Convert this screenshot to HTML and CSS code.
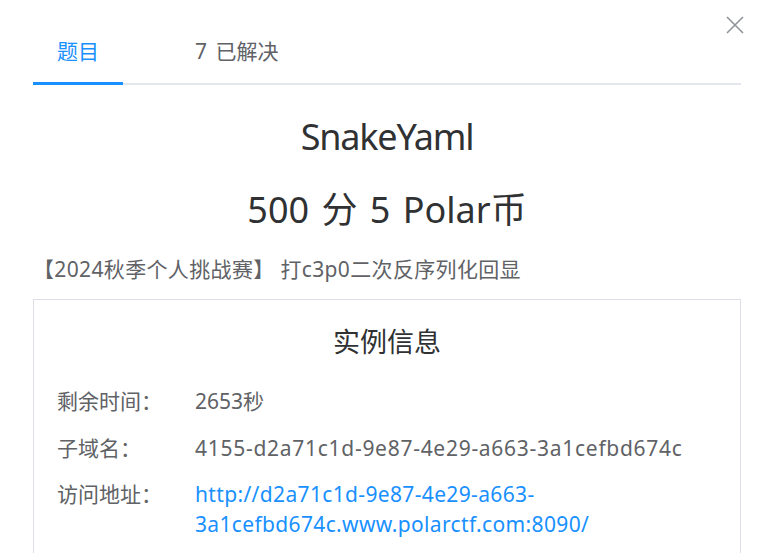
FILE: index.html
```html
<!DOCTYPE html>
<html lang="zh-CN">
<head>
<meta charset="utf-8">
<title>SnakeYaml</title>
<link rel="stylesheet" href="styles.css">
</head>
<body>
<div class="dialog">
  <button class="close" aria-label="关闭">
    <svg width="18" height="18" viewBox="0 0 18 18"><path d="M1 1L17 17M17 1L1 17" stroke="#909399" stroke-width="1.6" fill="none"/></svg>
  </button>
  <div class="tabs">
    <div class="tab active">题目</div>
    <div class="tab spaced">7 已解决</div>
  </div>
  <h1 class="title">SnakeYaml</h1>
  <div class="score">500 分 5 Polar币</div>
  <p class="desc">【2024秋季个人挑战赛】 打c3p0二次反序列化回显</p>
  <div class="card">
    <div class="card-title">实例信息</div>
    <div class="rows">
      <div class="row"><span class="label">剩余时间：</span><span class="value">2653秒</span></div>
      <div class="row"><span class="label">子域名：</span><span class="value mono">4155-d2a71c1d-9e87-4e29-a663-3a1cefbd674c</span></div>
      <div class="row"><span class="label">访问地址：</span><a class="value link" href="#">http://d2a71c1d-9e87-4e29-a663-3a1cefbd674c.www.polarctf.com:8090/</a></div>
    </div>
  </div>
</div>
</body>
</html>
```
FILE: styles.css
```css
* { box-sizing: border-box; }
html, body { margin: 0; padding: 0; background: #fff; }
body {
  font-family: "Noto Sans", "Noto Sans CJK SC", sans-serif;
  color: #606266;
  overflow: hidden;
}
.dialog {
  position: relative;
  padding: 20px 18px 40px 33px;
}
.close {
  position: absolute;
  top: 16px;
  right: 15px;
  width: 18px;
  height: 18px;
  padding: 0;
  border: 0;
  background: none;
  display: block;
}
.close svg { display: block; }
.tabs {
  display: flex;
  gap: 48px;
  border-bottom: 2px solid #e4e7ed;
}
.tab {
  position: relative;
  height: 63px;
  line-height: 63px;
  padding: 0 24px;
  font-size: 21px;
  color: #606266;
}
.tab.spaced { word-spacing: 3px; }
.tab.active { color: #1890ff; }
.tab.active::after {
  content: "";
  position: absolute;
  left: 0;
  right: 0;
  bottom: -2px;
  height: 3px;
  background: #1890ff;
}
.title {
  margin: 28px 0 0;
  font-size: 36px;
  line-height: 48px;
  font-weight: 400;
  letter-spacing: -1.2px;
  text-align: center;
  color: #303133;
}
.score {
  margin-top: 25px;
  font-size: 36px;
  line-height: 48px;
  word-spacing: 3px;
  text-align: center;
  color: #303133;
}
.desc {
  margin: 20px 0 0;
  font-size: 21px;
  line-height: 30px;
  letter-spacing: 0.35px;
  color: #606266;
}
.card {
  margin-top: 15px;
  border: 1px solid #dcdfe6;
  padding: 22px 23px 30px;
}
.card-title {
  font-size: 27px;
  line-height: 40px;
  text-align: center;
  color: #303133;
}
.rows {
  margin-top: 24px;
  display: flex;
  flex-direction: column;
  gap: 16.5px;
}
.row {
  display: flex;
  font-size: 21px;
  line-height: 30px;
}
.label {
  flex: 0 0 138px;
  color: #606266;
}
.value {
  flex: 1;
  min-width: 0;
  color: #606266;
}
.mono { letter-spacing: 0.72px; }
.link {
  color: #1890ff;
  text-decoration: none;
  letter-spacing: 0.35px;
  max-width: 540px;
}
```
